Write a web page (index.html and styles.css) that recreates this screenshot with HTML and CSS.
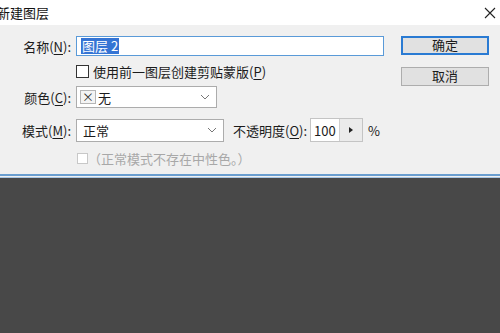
FILE: index.html
```html
<!DOCTYPE html>
<html>
<head>
    <meta charset="utf-8"/>
    <title>新建图层</title>
    <link rel="stylesheet" href="styles.css">
</head>
<body>
<div class="window">
    <div class="titlebar">
        <span class="title">新建图层</span>
        <svg class="close" width="12" height="12" viewBox="0 0 12 12">
            <path d="M1 1L11 11M11 1L1 11" stroke="#222" stroke-width="1.1" fill="none"/>
        </svg>
    </div>
    <div class="dialog">
        <div class="form">
            <div class="row row-name">
                <label class="label">名称(<u>N</u>):</label>
                <div class="textbox name-box"><span class="selected">图层 2</span></div>
            </div>
            <div class="row row-clip">
                <span class="check"></span>
                <span class="check-text">使用前一图层创建剪贴蒙版(<u>P</u>)</span>
            </div>
            <div class="row row-color">
                <label class="label">颜色(<u>C</u>):</label>
                <div class="select color-select">
                    <span class="swatch">×</span>
                    <span class="value">无</span>
                    <svg class="chev" width="10" height="6" viewBox="0 0 10 6"><path d="M1 1L5 5L9 1" stroke="#777" stroke-width="1" fill="none"/></svg>
                </div>
            </div>
            <div class="row row-mode">
                <label class="label">模式(<u>M</u>):</label>
                <div class="select mode-select">
                    <span class="value">正常</span>
                    <svg class="chev" width="10" height="6" viewBox="0 0 10 6"><path d="M1 1L5 5L9 1" stroke="#777" stroke-width="1" fill="none"/></svg>
                </div>
                <span class="opacity-label">不透明度(<u>O</u>):</span>
                <div class="spin">
                    <span class="spin-value">100</span>
                    <span class="spin-btn">
                        <svg width="4" height="6" viewBox="0 0 4 6"><path d="M0 0L4 3L0 6Z" fill="#222"/></svg>
                    </span>
                </div>
                <span class="percent">%</span>
            </div>
            <div class="row row-neutral">
                <span class="check disabled"></span>
                <span class="check-text muted">（正常模式不存在中性色。）</span>
            </div>
        </div>
        <div class="buttons">
            <div class="btn btn-default">确定</div>
            <div class="btn">取消</div>
        </div>
    </div>
    <div class="edge"></div>
    <div class="backdrop"></div>
</div>
</body>
</html>
```

FILE: styles.css
```css
* {
    margin:0;
    padding:0;
    box-sizing: border-box;
}
body {
    width:500px;
    height:333px;
    overflow: hidden;
    font-family: "Noto Sans CJK SC", "Liberation Sans", sans-serif;
    font-size:13px;
    color:#1b1b1b;
    background:#484848;
}
u {
    text-decoration: underline;
    text-underline-offset: 2px;
}
.window {
    display:flex;
    flex-direction: column;
    height:333px;
}
.titlebar {
    height:25px;
    background:#fff;
    display:flex;
    align-items: center;
    justify-content: space-between;
    padding-right:4px;
}
.title {
    margin-left:-3px;
    font-size:13px;
    color:#111;
    line-height:1;
}
.dialog {
    height:149px;
    background:#f0f0f0;
    display:flex;
    padding-top:11px;
}
.form {
    width:401px;
    display:flex;
    flex-direction: column;
}
.row {
    display:flex;
    align-items: center;
}
.label {
    width:72px;
    text-align: right;
    padding-right:1px;
    margin-right:4px;
    white-space: nowrap;
}
.row-name { height:20px; }
.row-clip { height:18px; margin-top:6px; padding-left:76px; }
.row-color { height:22px; margin-top:6px; }
.row-mode { height:24px; margin-top:10px; }
.row-neutral { height:18px; margin-top:7px; padding-left:77px; }

.textbox {
    height:20px;
    background:#fff;
    border:1px solid #5a9ad8;
    display:flex;
    align-items: center;
    padding-left:4px;
}
.name-box { width:308px; }
.selected {
    background:#3574d4;
    color:#fff;
    line-height:16px;
    padding:0 1px;
}
.check {
    width:13px;
    height:13px;
    border:1px solid #333;
    background:#fff;
    margin-right:4px;
}
.check.disabled {
    width:11px;
    height:11px;
    border-color:#c8c8c8;
    margin-right:0;
}
.check-text { white-space: nowrap; }
.muted { color:#a8a8a8; }

.select {
    background:#fff;
    border:1px solid #acacac;
    display:flex;
    align-items: center;
    position: relative;
    height:100%;
}
.color-select { width:141px; padding-left:3px; }
.mode-select { width:148px; padding-left:6px; height:23px; }
.swatch {
    width:16px;
    height:14px;
    border:1px solid #b5b5b5;
    background:#f4f4f4;
    font-size:12px;
    line-height:12px;
    text-align: center;
    color:#333;
    margin-right:2px;
}
.chev {
    position: absolute;
    right:6px;
    top:50%;
    margin-top:-3px;
}
.opacity-label {
    margin-left:9px;
    margin-right:3px;
    white-space: nowrap;
}
.spin {
    display:flex;
    height:24px;
    border:1px solid #c4c4c4;
}
.spin-value {
    width:29px;
    background:#fff;
    display:flex;
    align-items: center;
    padding-left:3px;
    border-right:1px solid #cfcfcf;
}
.spin-btn {
    width:22px;
    background:#ebebeb;
    display:flex;
    align-items: center;
    justify-content: center;
}
.percent { margin-left:5px; }

.buttons {
    display:flex;
    flex-direction: column;
    gap:12px;
}
.btn {
    width:88px;
    height:19px;
    background:#e1e1e1;
    border:1px solid #adadad;
    text-align: center;
    line-height:16px;
    font-size:13px;
}
.btn-default {
    border:2px solid #2a7bd3;
    line-height:14px;
}
.edge {
    height:4px;
    background:#f0f0f0;
    border-top:2px solid #6a9ed0;
    border-bottom:1px solid #a9c6e3;
}
.backdrop {
    flex:1;
    background:#484848;
}
```
